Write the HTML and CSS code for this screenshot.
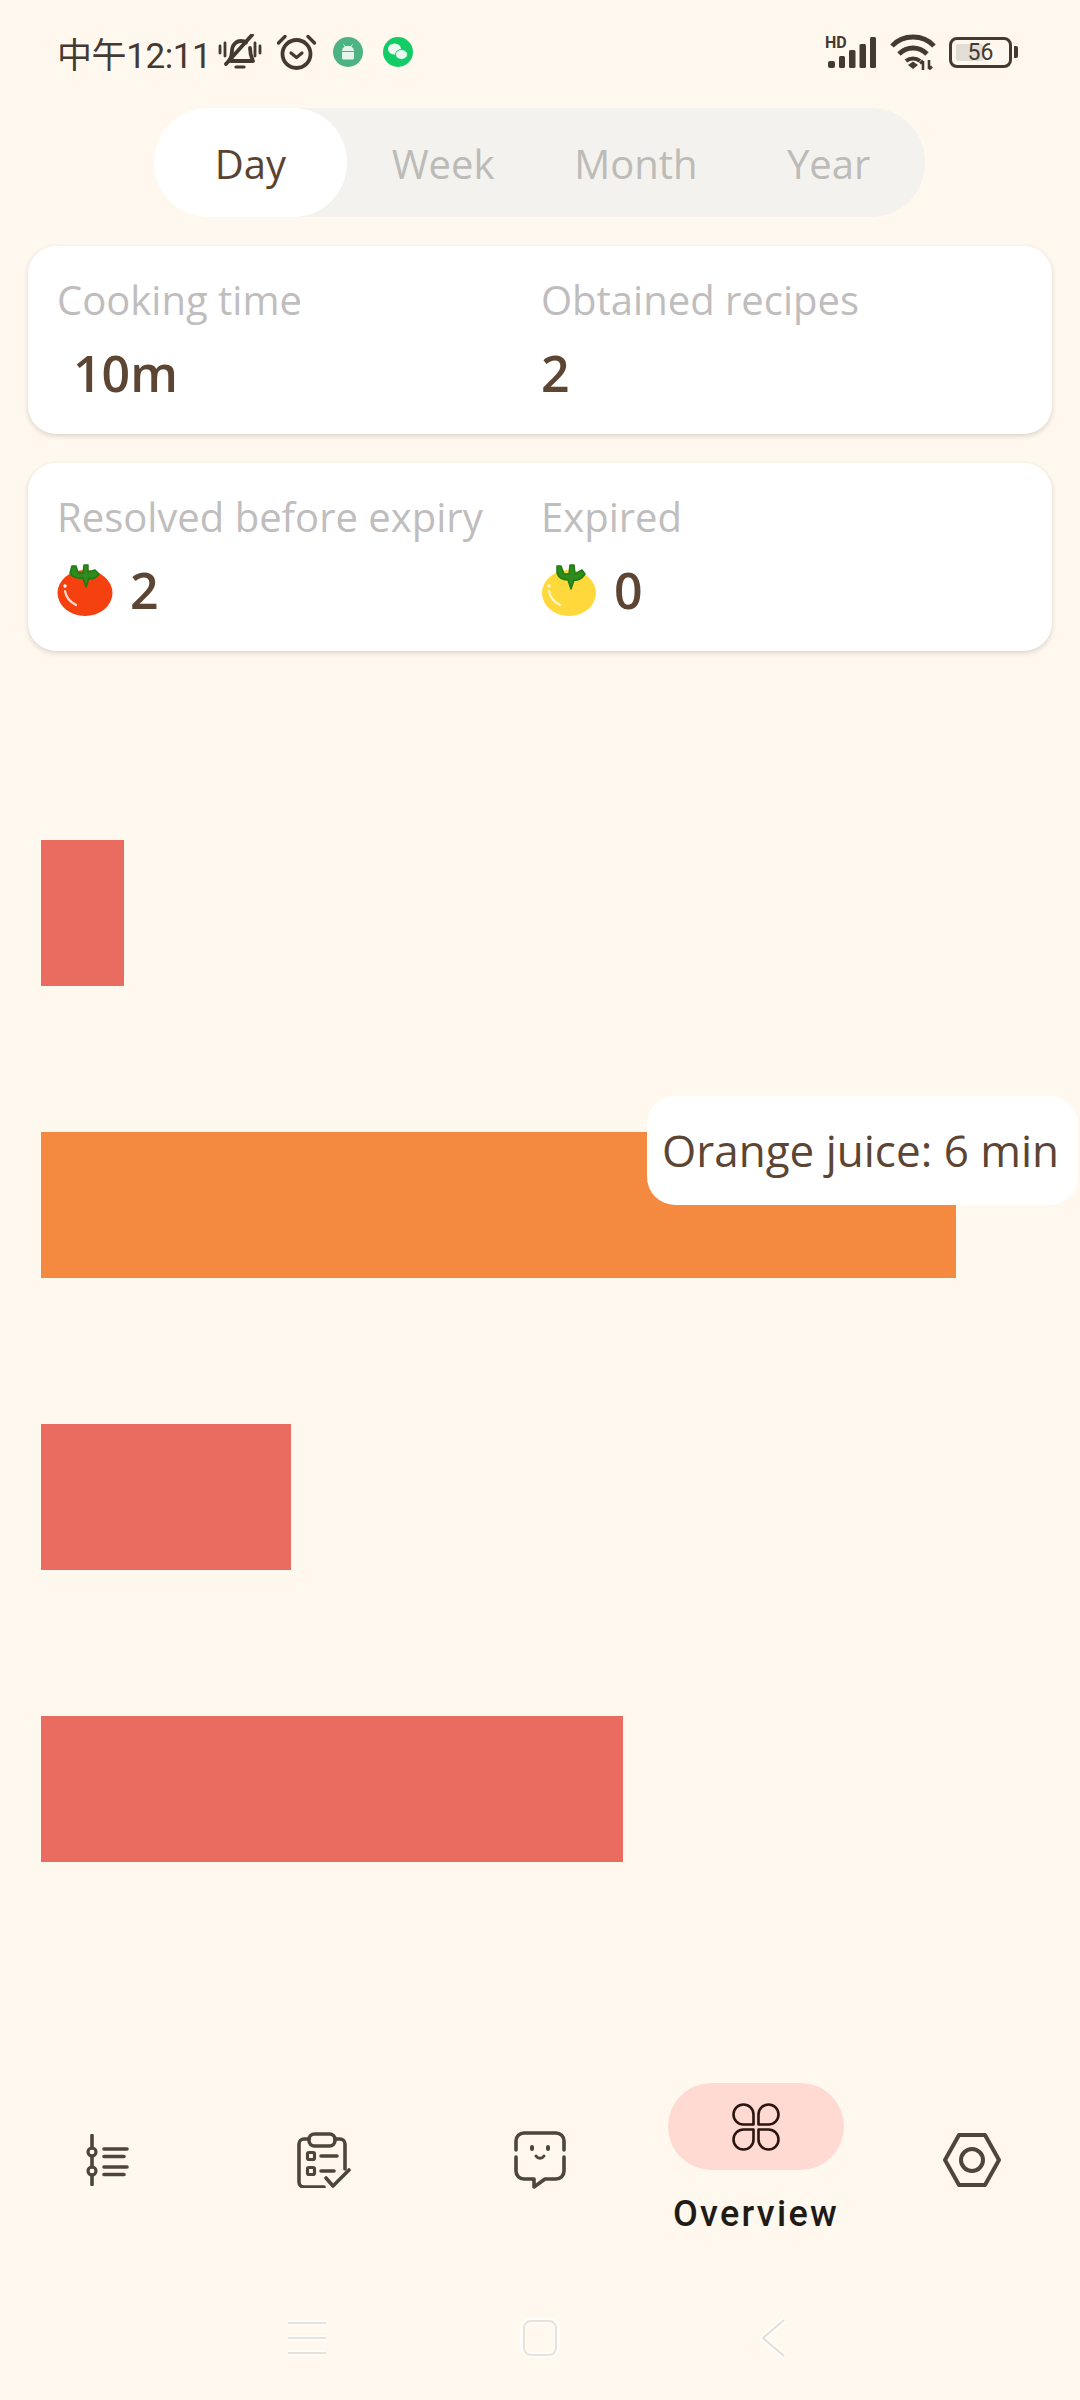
FILE: index.html
```html
<!DOCTYPE html>
<html lang="en">
<head>
    <meta charset="UTF-8">
    <title>Overview</title>
    <link rel="stylesheet" href="styles.css">
</head>
<body>
<div class="page">
    <div class="status">
        <span class="time">中午12:11</span>
        <svg class="bell" viewBox="0 0 44 36" width="44" height="36" fill="none" stroke="#443a32" stroke-width="3.800" stroke-linecap="round" stroke-linejoin="round">
            <path d="M2 12v7M7 9v13M37 9v13M42 12v7" stroke-width="2.800"/>
            <path d="M11 27c2-3 3-5 3-10 0-6 4-10 9-10 2 0 4 .6 5 1.600M32 14c0 5 1 9 3 13H13"/>
            <path d="M34 1 8 30"/>
            <path d="M18 33h8" stroke-width="3.200"/>
        </svg>
        <svg class="alarm" viewBox="0 0 39 36" width="39" height="36" fill="none" stroke="#443a32" stroke-linecap="round" stroke-linejoin="round">
            <circle cx="19.500" cy="20" r="14" stroke-width="3.800"/>
            <path d="M1.500 9 8 2.500M37.500 9 31 2.500" stroke-width="3.400"/>
            <path d="m14 19 5.500 4.500L25 19" stroke-width="3.200"/>
        </svg>
        <svg class="dot" viewBox="0 0 30 30" width="30" height="30">
            <circle cx="15" cy="15" r="15" fill="#4db384"/>
            <path d="M9 15h12v6a1.500 1.500 0 0 1-1.500 1.500h-9A1.500 1.500 0 0 1 9 21zM9 14c0-3 2.500-5 6-5s6 2 6 5z" fill="#e4f5ec"/>
            <path d="m10.500 7.500 2 2.500M19.500 7.500l-2 2.500" stroke="#e4f5ec" stroke-width="1"/>
        </svg>
        <svg class="dot" viewBox="0 0 30 30" width="30" height="30">
            <circle cx="15" cy="15" r="15" fill="#14cc66"/>
            <ellipse cx="11.500" cy="12" rx="6.500" ry="5.500" fill="#eafaf1"/>
            <ellipse cx="18.500" cy="17.500" rx="6" ry="5" fill="#eafaf1" stroke="#14cc66" stroke-width="1"/>
        </svg>
        <div class="status-right">
            <svg viewBox="0 0 52 38" width="52" height="38" fill="#443a32">
                <text class="hd" x="0" y="15">HD</text>
                <rect x="3" y="28" width="7" height="7" rx="2"/>
                <rect x="14" y="23" width="6" height="12" rx="1.500"/>
                <rect x="24" y="17" width="6.500" height="18" rx="1.500"/>
                <rect x="34.500" y="11" width="6.500" height="24" rx="1.500"/>
                <rect x="45" y="4" width="6" height="31" rx="1.500"/>
            </svg>
            <svg viewBox="0 0 46 36" width="46" height="36" fill="none" stroke="#443a32" stroke-width="4.800">
                <path d="M2 12C13 0 33 0 44 12"/>
                <path d="M9 20c8-8 20-8 28 0"/>
                <path d="M16 27c4-3.500 10-3.500 14 0" stroke-width="4"/>
                <path d="m18 31 5-3.500 5 3.500-5 4z" fill="#443a32" stroke="none"/>
                <path d="M33 36v-9m-3 2.500 3-3M39 26v9m3-2.500-3 3" stroke-width="2.600"/>
            </svg>
            <div class="battery">
                <div class="battery-box">
                    <span class="battery-fill"></span>
                    <span class="battery-num">56</span>
                </div>
                <span class="battery-nub"></span>
            </div>
        </div>
    </div>

    <div class="tabs">
        <div class="tab active">Day</div>
        <div class="tab">Week</div>
        <div class="tab">Month</div>
        <div class="tab">Year</div>
    </div>

    <div class="card">
        <div class="stat">
            <div class="label">Cooking time</div>
            <div class="value indent">10m</div>
        </div>
        <div class="stat">
            <div class="label">Obtained recipes</div>
            <div class="value">2</div>
        </div>
    </div>

    <div class="card">
        <div class="stat">
            <div class="label">Resolved before expiry</div>
            <div class="value with-icon">
                <svg class="tomato" viewBox="0 0 56 52" width="56" height="52">
                    <ellipse cx="28" cy="29" rx="27.500" ry="23" fill="#f5400f"/>
                    <circle cx="8" cy="22" r="1.700" fill="#fff"/>
                    <path d="M8 27c1 6 5 11 11 14" fill="none" stroke="#ffd9cc" stroke-width="2.200" stroke-linecap="round"/>
                    <path d="M15 2h4l2 7h5l1-8h4l0 7 7-2 4 4c-4 5-8 5-10 4l-3 9-3-9c-9 1-12-3-13-5z" fill="#2e8b1e" stroke="#1f7a0f" stroke-width="1.500" stroke-linejoin="round"/>
                </svg>
                <span>2</span>
            </div>
        </div>
        <div class="stat">
            <div class="label">Expired</div>
            <div class="value with-icon">
                <svg class="tomato" viewBox="0 0 56 52" width="56" height="52">
                    <ellipse cx="28" cy="29" rx="27" ry="23" fill="#ffd93b"/>
                    <circle cx="8" cy="22" r="1.700" fill="#fff6c9"/>
                    <path d="M8 27c1 6 5 11 11 14" fill="none" stroke="#fff6c9" stroke-width="2.200" stroke-linecap="round"/>
                    <path d="M16 2h4l3 8h5l1-9h4l1 9 7-4 3 4c-3 5-8 7-11 6l-3 9-3-9c-7 0-10-4-11-7z" fill="#2e8b1e" stroke="#1f7a0f" stroke-width="1.500" stroke-linejoin="round"/>
                </svg>
                <span>0</span>
            </div>
        </div>
    </div>

    <div class="chart">
        <div class="bar red" style="width: 83px"></div>
        <div class="bar orange" style="width: 915px">
            <div class="tooltip">Orange juice: 6 min</div>
        </div>
        <div class="bar red" style="width: 250px"></div>
        <div class="bar red" style="width: 582px"></div>
    </div>

    <nav class="nav">
        <div class="nav-item">
            <svg viewBox="0 0 44 52" width="44" height="52" fill="none" stroke="#4e463a" stroke-linecap="round">
                <path d="M6 1.500V14M6 22v11M6 41v9.500" stroke-width="3.600"/>
                <circle cx="6" cy="18" r="4" stroke-width="3.200"/>
                <circle cx="6" cy="37" r="4" stroke-width="3.200"/>
                <path d="M18 15h23M18 22.500h20M18 33h23M18 40.500h20" stroke-width="3.600"/>
            </svg>
        </div>
        <div class="nav-item">
            <svg viewBox="0 0 54 56" width="54" height="56" fill="none" stroke="#4e463a" stroke-width="3.600" stroke-linecap="round" stroke-linejoin="round">
                <rect x="12" y="2" width="26" height="12" rx="5.500"/>
                <path d="M12 7H7a5 5 0 0 0-5 5v38a5 5 0 0 0 5 5h20M38 7h5a5 5 0 0 1 5 5v25"/>
                <rect x="10.500" y="20.500" width="7" height="7" rx="1.500" stroke-width="3.200"/>
                <rect x="10.500" y="35.500" width="7" height="7" rx="1.500" stroke-width="3.200"/>
                <path d="M24 24h16M24 39h13"/>
                <path d="m29 46 7 8 16-16"/>
            </svg>
        </div>
        <div class="nav-item">
            <svg viewBox="0 0 52 58" width="52" height="58" fill="none" stroke="#4e463a" stroke-width="3.600" stroke-linecap="round" stroke-linejoin="round">
                <path d="M2 19v-9a8 8 0 0 1 8-8h32a8 8 0 0 1 8 8v9M2 26v14a8 8 0 0 0 8 8h10v8l11-8h11a8 8 0 0 0 8-8V26"/>
                <path d="M18 16v2M34 16v2" stroke-width="4"/>
                <path d="M22 25c2 3 6 3 8 0" stroke-width="3"/>
            </svg>
        </div>
        <div class="nav-item current">
            <div class="nav-pill">
                <svg viewBox="0 0 48 48" width="48" height="48" fill="none" stroke="#2b1510" stroke-width="2.600" stroke-linejoin="round">
                    <path d="M21.500 21.500H11.500a10 10 0 1 1 10-10z"/>
                    <path d="M26.500 21.500H36.500a10 10 0 1 0-10-10z"/>
                    <path d="M21.500 26.500H11.500a10 10 0 1 0 10 10z"/>
                    <path d="M26.500 26.500H36.500a10 10 0 1 1-10 10z"/>
                </svg>
            </div>
            <div class="nav-label">Overview</div>
        </div>
        <div class="nav-item">
            <svg viewBox="0 0 58 54" width="58" height="54" fill="none" stroke="#4e463a" stroke-width="4" stroke-linejoin="round">
                <path d="M16 2h26l14 25-14 25H16L2 27z"/>
                <circle cx="29" cy="27" r="11"/>
            </svg>
        </div>
    </nav>

    <div class="gestures">
        <svg viewBox="0 0 40 36" width="40" height="36" fill="none" stroke-width="2">
            <path d="M1 3h38M1 18h38M1 33h38" stroke="#fff" stroke-width="6" opacity=".6"/>
            <path d="M1 3h38M1 18h38M1 33h38" stroke="#e8e3da"/>
        </svg>
        <svg viewBox="0 0 40 40" width="40" height="40" fill="none" stroke-width="2">
            <rect x="3" y="3" width="34" height="34" rx="8" stroke="#fff" stroke-width="6" opacity=".7"/>
            <rect x="4" y="3" width="32" height="34" rx="7" stroke="#e8e3da"/>
        </svg>
        <svg viewBox="0 0 33 40" width="33" height="40" fill="none" stroke-width="2">
            <path d="M31 2 10 20l21 18" stroke="#fff" stroke-width="6" opacity=".7"/>
            <path d="M31 2 10 20l21 18" stroke="#e4dfd6"/>
        </svg>
    </div>
</div>
</body>
</html>
```

FILE: styles.css
```css
* {
    box-sizing: border-box;
}
body {
    margin: 0;
    background-color: #fff8ef;
    font-family: "Open Sans", "Noto Sans", sans-serif;
}
svg {
    display: block;
    flex-shrink: 0;
}
.page {
    display: flex;
    flex-direction: column;
    width: 1080px;
    height: 2400px;
    overflow: hidden;
}

/* status bar */
.status {
    display: flex;
    align-items: center;
    height: 108px;
    padding: 0 62px 4px 57px;
}
.time {
    font-family: Roboto, "Noto Sans CJK SC", sans-serif;
    font-size: 35px;
    letter-spacing: -0.4px;
    color: #443a32;
    margin-right: 7px;
}
.alarm {
    margin-left: 15px;
}
.dot {
    margin-left: 17px;
}
.dot + .dot {
    margin-left: 20px;
}
.status-right {
    display: flex;
    align-items: center;
    gap: 13px;
    margin-left: auto;
}
.hd {
    font-family: Roboto, sans-serif;
    font-size: 16px;
    font-weight: 700;
}
.battery {
    display: flex;
    align-items: center;
    gap: 2px;
}
.battery-box {
    position: relative;
    width: 63px;
    height: 31px;
    border: 3px solid #443a32;
    border-radius: 8px;
}
.battery-fill {
    position: absolute;
    left: 4px;
    top: 4px;
    bottom: 4px;
    width: 27px;
    background-color: #e2ddd5;
    border-radius: 2px;
}
.battery-num {
    position: absolute;
    left: 0;
    right: 0;
    top: 0;
    bottom: 0;
    text-align: center;
    font-family: Roboto, sans-serif;
    font-size: 23px;
    line-height: 25px;
    color: #443a32;
}
.battery-nub {
    width: 4px;
    height: 12px;
    background-color: #443a32;
    border-radius: 0 2px 2px 0;
}

/* day / week / month / year */
.tabs {
    display: flex;
    width: 771px;
    height: 109px;
    margin-left: 154px;
    background-color: #f3f2ee;
    border-radius: 54px;
}
.tab {
    display: flex;
    flex: 1;
    align-items: center;
    justify-content: center;
    padding-top: 2px;
    border-radius: 54px;
    font-size: 40px;
    font-weight: 500;
    color: #bdbbb8;
}
.tab.active {
    background-color: #fff;
    color: #5a4332;
}

/* stat cards */
.card {
    display: grid;
    grid-template-columns: 484px 1fr;
    height: 188px;
    margin: 29px 28px 0;
    padding: 29px 29px 0;
    background-color: #fff;
    border-radius: 28px;
    box-shadow: 0 2px 5px rgba(60, 40, 20, 0.18);
}
.card + .card {
    margin-top: 29px;
}
.label {
    height: 50px;
    font-size: 40px;
    font-weight: 500;
    line-height: 50px;
    color: #bfbdbd;
    white-space: nowrap;
}
.value {
    height: 56px;
    margin-top: 20px;
    font-size: 50px;
    font-weight: 600;
    line-height: 56px;
    color: #5d4534;
}
.value.indent {
    padding-left: 16px;
}
.with-icon {
    display: flex;
    align-items: center;
    gap: 17px;
}

/* bars */
.chart {
    display: flex;
    flex-direction: column;
    gap: 146px;
    margin: 189px 0 0 41px;
}
.bar {
    position: relative;
    height: 146px;
}
.red {
    background-color: #ea6c60;
}
.orange {
    background-color: #f48a3f;
}
.tooltip {
    position: absolute;
    left: 606px;
    top: -36px;
    width: 431px;
    height: 109px;
    padding-left: 15px;
    background-color: #fff;
    border-radius: 28px;
    font-size: 44px;
    font-weight: 500;
    line-height: 109px;
    color: #5d4534;
    white-space: nowrap;
}

/* bottom nav */
.nav {
    display: grid;
    grid-template-columns: repeat(5, 1fr);
    height: 154px;
    margin-top: auto;
}
.nav-item {
    display: flex;
    flex-direction: column;
    align-items: center;
    justify-content: center;
}
.nav-pill {
    display: flex;
    align-items: center;
    justify-content: center;
    width: 176px;
    height: 87px;
    background-color: #ffdad3;
    border-radius: 44px;
}
.nav-label {
    margin-top: 21px;
    font-family: Roboto, sans-serif;
    font-size: 36px;
    font-weight: 500;
    line-height: 46px;
    letter-spacing: 2.3px;
    color: #1f1b16;
}
.gestures {
    display: flex;
    align-items: center;
    gap: 193px;
    height: 163px;
    padding: 39px 0 0 287px;
}
```
